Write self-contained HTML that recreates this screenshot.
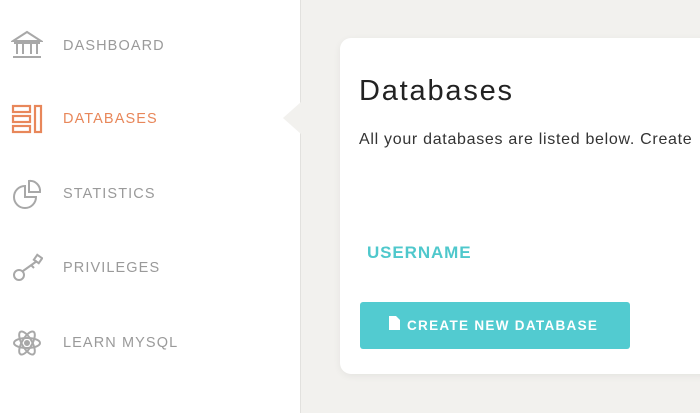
<!DOCTYPE html>
<html><head><style>
*{margin:0;padding:0;box-sizing:border-box}
body{width:700px;height:413px;overflow:hidden;background:#f2f1ee;font-family:"Liberation Sans",sans-serif;position:relative}
.side{position:absolute;left:0;top:0;width:301px;height:413px;background:#fff;border-right:1px solid #e2e1de}
.notch{position:absolute;left:283px;top:102px;width:0;height:0;border-top:16px solid transparent;border-bottom:16px solid transparent;border-right:18px solid #f2f1ee}
.item{position:absolute;left:63px;font-size:14.5px;color:#9a9a9a;letter-spacing:1.1px}
.ic{position:absolute;left:11px}
.card{position:absolute;left:340px;top:38px;width:400px;height:336px;background:#fff;border-radius:11px;box-shadow:0 2px 8px rgba(0,0,0,0.06)}
h1{position:absolute;left:19px;top:37px;font-weight:normal;font-size:29px;color:#222;letter-spacing:1.8px}
.p{position:absolute;left:19px;top:93px;font-size:16px;color:#333;white-space:nowrap;letter-spacing:0.7px}
.u{position:absolute;left:27px;top:205px;font-size:17px;font-weight:bold;color:#4fc8cc;letter-spacing:0.9px}
.btn{position:absolute;left:20px;top:264px;width:270px;height:47px;background:#52cbd0;border-radius:3px;color:#fff;font-weight:bold;font-size:13.5px;padding:16px 0 0 47px;letter-spacing:1.3px;white-space:nowrap}
</style></head><body>
<div class="side">
<svg class="ic" style="top:30px" width="32" height="30" viewBox="0 0 32 30" fill="none" stroke="#a8a8a8" stroke-width="2"><path d="M2 11 L16 2 L30 11 Z"/><path d="M6 14v10M12 14v10M20 14v10M26 14v10M3 13h26M2 27h28"/></svg>
<div class="item" style="top:38px">DASHBOARD</div>
<svg class="ic" style="top:104px" width="32" height="30" viewBox="0 0 32 30" fill="none" stroke="#e8875a" stroke-width="2.2"><rect x="2" y="2" width="17" height="6"/><rect x="2" y="12" width="17" height="6"/><rect x="2" y="22" width="17" height="6"/><rect x="24" y="2" width="6" height="26"/></svg>
<div class="item" style="top:111px;color:#e8875a">DATABASES</div>
<svg class="ic" style="top:178px" width="32" height="32" viewBox="0 0 32 32" fill="none" stroke="#a8a8a8" stroke-width="2"><path d="M14 8 A11 11 0 1 0 25 19 L14 19 Z"/><path d="M18 3 A10 10 0 0 1 29 14 L18 14 Z"/></svg>
<div class="item" style="top:186px">STATISTICS</div>
<svg class="ic" style="top:253px" width="32" height="30" viewBox="0 0 32 30" fill="none" stroke="#a8a8a8" stroke-width="2"><circle cx="8" cy="22" r="5"/><path d="M12 18 L26 8"/><rect x="24" y="3" width="6" height="6" transform="rotate(35 27 6)"/><path d="M20 12l3 3"/></svg>
<div class="item" style="top:260px">PRIVILEGES</div>
<svg class="ic" style="top:328px" width="32" height="30" viewBox="0 0 32 30" fill="none" stroke="#a8a8a8" stroke-width="2"><ellipse cx="16" cy="15" rx="13" ry="5"/><ellipse cx="16" cy="15" rx="13" ry="5" transform="rotate(60 16 15)"/><ellipse cx="16" cy="15" rx="13" ry="5" transform="rotate(-60 16 15)"/><circle cx="16" cy="15" r="2" fill="#a8a8a8"/></svg>
<div class="item" style="top:335px">LEARN MYSQL</div>
</div>
<div class="notch"></div>
<div class="card">
<h1>Databases</h1>
<div class="p">All your databases are listed below. Create</div>
<div class="u">USERNAME</div>
<div class="btn"><svg style="position:absolute;left:29px;top:14px" width="11" height="14" viewBox="0 0 11 14"><path d="M0 0h7l4 4v10H0z" fill="#fff"/></svg>CREATE NEW DATABASE</div>
</div>
</body></html>
